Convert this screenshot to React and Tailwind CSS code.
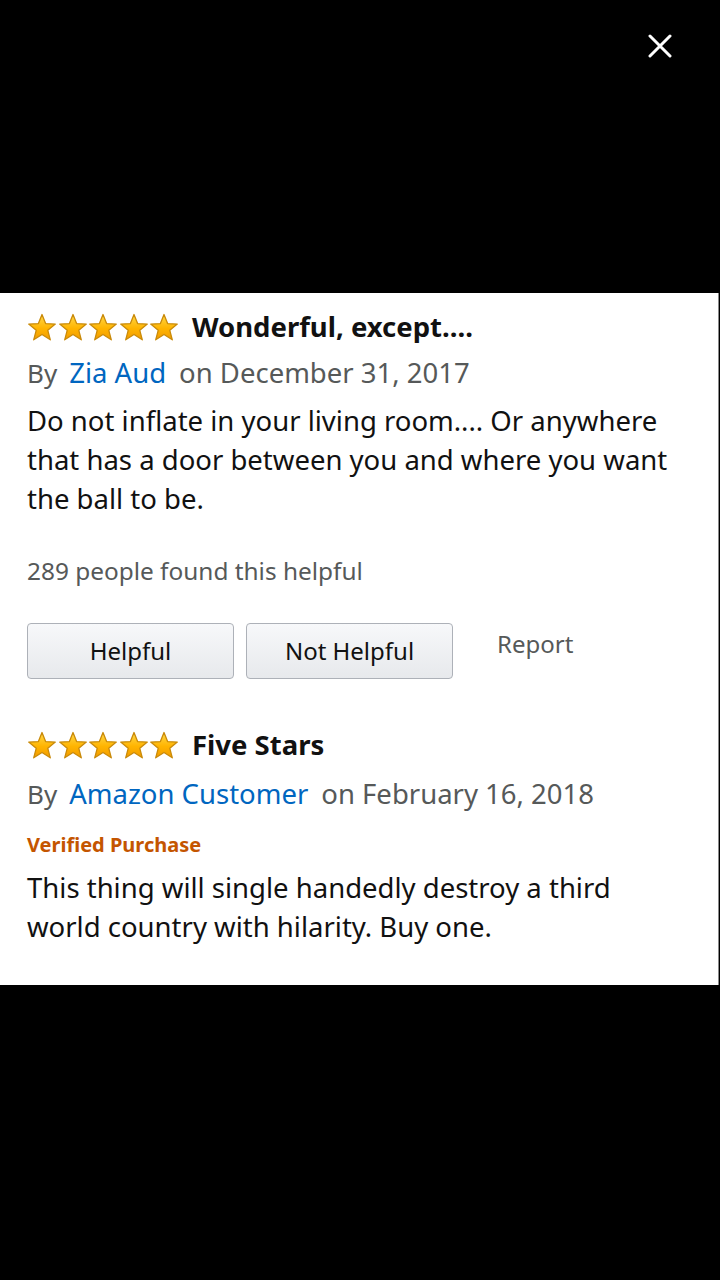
import React from "react";

const Star = () => (
  <svg width="30" height="29" viewBox="0 0 30 29">
    <defs>
      <linearGradient id="starFill" x1="0" y1="0" x2="0" y2="1">
        <stop offset="0%" stopColor="#ffd84a" />
        <stop offset="55%" stopColor="#ffb400" />
        <stop offset="100%" stopColor="#f29b00" />
      </linearGradient>
    </defs>
    <path
      d="M15 1.5 L18.6 10.6 L28.3 11.1 L20.8 17.3 L23.3 26.8 L15 21.5 L6.7 26.8 L9.2 17.3 L1.7 11.1 L11.4 10.6 Z"
      fill="url(#starFill)"
      stroke="#c98a0a"
      strokeWidth="1.3"
      strokeLinejoin="round"
    />
  </svg>
);

const Stars = () => (
  <div className="flex items-center gap-[0.5px]">
    {[0, 1, 2, 3, 4].map((i) => (
      <Star key={i} />
    ))}
  </div>
);

const Byline = ({ name, date }) => (
  <div className="flex items-center text-[27.5px] leading-[36px] text-[#565959]">
    <span className="text-[26px]">By</span>
    <span className="ml-[12px] text-[#0066c0]">{name}</span>
    <span className="ml-[13px]">on {date}</span>
  </div>
);

const Review = ({ title, name, date, verified, body, children, top, byTop }) => (
  <div className={top}>
    <div className="flex items-center h-[36px]">
      <Stars />
      <h2 className="ml-[13px] text-[27.5px] font-bold text-[#111]">{title}</h2>
    </div>
    <div className={byTop}>
      <Byline name={name} date={date} />
    </div>
    {verified && (
      <div className="mt-[19px] text-[20px] leading-[28px] font-bold text-[#c45500]">
        Verified Purchase
      </div>
    )}
    <p className={`${verified ? "mt-[9px]" : "mt-[10px]"} text-[27.5px] leading-[39px] text-[#111] pr-[40px]`}>
      {body}
    </p>
    {children}
  </div>
);

export default function App() {
  return (
    <div
      className="w-[720px] h-[1280px] bg-black flex flex-col"
      style={{ fontFamily: '"Noto Sans", "Open Sans", sans-serif' }}
    >
      <div className="h-[293px] flex justify-end items-start pt-[34px] pr-[48px]">
        <button aria-label="Close">
          <svg width="24" height="24" viewBox="0 0 24 24">
            <path d="M2 2 L22 22 M22 2 L2 22" stroke="#fff" strokeWidth="3" strokeLinecap="round" />
          </svg>
        </button>
      </div>

      <div className="w-[719px] bg-white border-r border-[#8a8a8a] pl-[27px] pt-[16px] pb-[39px]">
        <Review
          byTop="mt-[10px]"
          title="Wonderful, except...."
          name="Zia Aud"
          date="December 31, 2017"
          body="Do not inflate in your living room.... Or anywhere that has a door between you and where you want the ball to be."
        >
          <div className="mt-[38px] text-[24.4px] leading-[30px] text-[#565959]">
            289 people found this helpful
          </div>
          <div className="mt-[37px] flex items-start">
            <button className="w-[207px] h-[56px] rounded-[4px] border border-[#adb1b8] bg-gradient-to-b from-[#f7f8fa] to-[#e7e9ec] text-[24px] text-[#111]">
              Helpful
            </button>
            <button className="ml-[12px] w-[207px] h-[56px] rounded-[4px] border border-[#adb1b8] bg-gradient-to-b from-[#f7f8fa] to-[#e7e9ec] text-[24px] text-[#111]">
              Not Helpful
            </button>
            <span className="ml-[44px] mt-[5px] text-[24px] leading-[32px] text-[#565959]">Report</span>
          </div>
        </Review>

        <Review
          top="mt-[48px]"
          byTop="mt-[13px]"
          title="Five Stars"
          name="Amazon Customer"
          date="February 16, 2018"
          verified
          body="This thing will single handedly destroy a third world country with hilarity. Buy one."
        />
      </div>

      <div className="flex-1" />
    </div>
  );
}
